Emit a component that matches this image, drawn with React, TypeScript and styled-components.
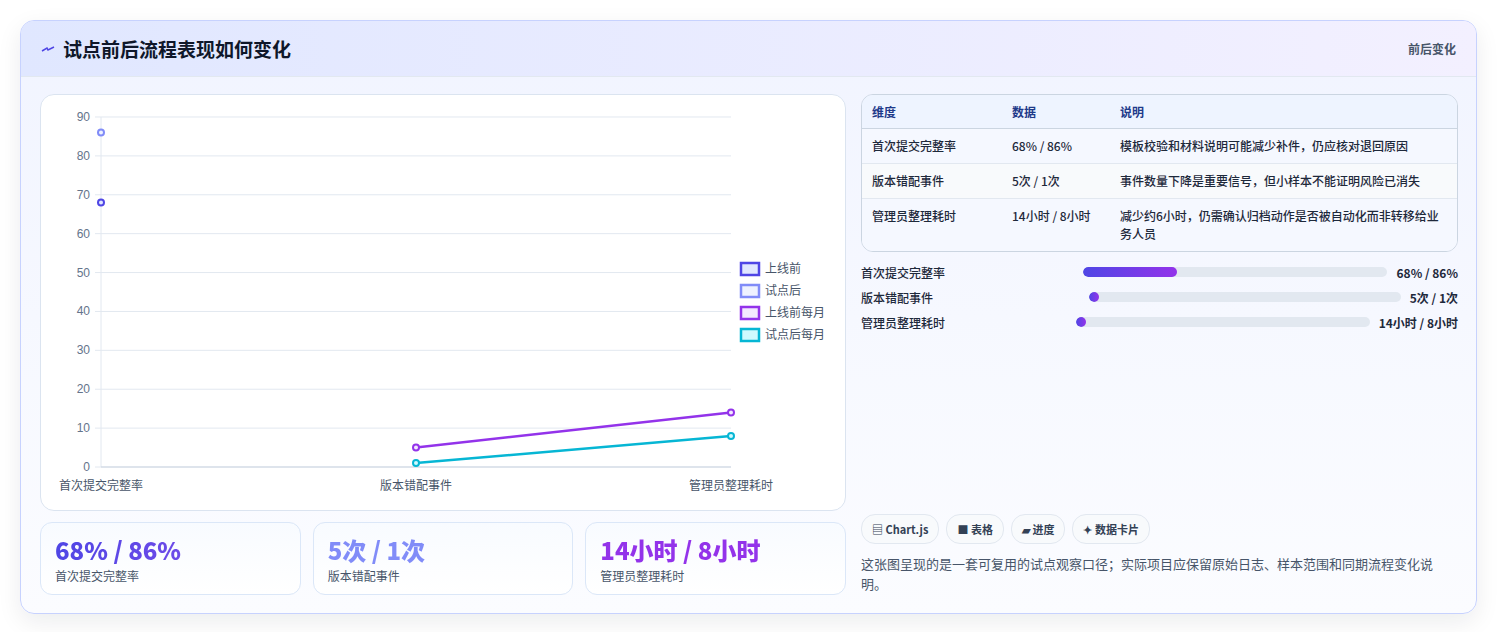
import styled, { createGlobalStyle } from "styled-components";

const GlobalStyle = createGlobalStyle`
  body {
    margin: 0;
    background: #ffffff;
    font-family: "Noto Sans CJK SC", "Noto Sans", sans-serif;
    color: #1e293b;
  }
`;

const Page = styled.div`
  padding: 20px 21px 20px 20px;
`;

const Panel = styled.section`
  border: 1px solid #c7d2fe;
  border-radius: 14px;
  overflow: hidden;
  background: linear-gradient(180deg, #f1f4ff 0%, #fbfcff 100%);
  box-shadow: 0 8px 24px rgba(15, 23, 42, 0.08);
`;

const Header = styled.header`
  height: 55px;
  display: flex;
  align-items: center;
  justify-content: space-between;
  padding: 0 20px 0 20px;
  background: linear-gradient(90deg, #e0e7ff 0%, #f3f0ff 100%);
  border-bottom: 1px solid #e2e8f0;
`;

const Title = styled.h2`
  margin: 0;
  display: flex;
  align-items: center;
  gap: 8px;
  font-size: 19px;
  font-weight: 700;
  color: #0f172a;
`;

const Tag = styled.span`
  font-size: 12px;
  font-weight: 700;
  color: #475569;
`;

const Body = styled.div`
  display: grid;
  grid-template-columns: 806px 1fr;
  gap: 15px;
  padding: 17px 18px 18px 19px;
`;

const LeftCol = styled.div`
  display: flex;
  flex-direction: column;
  gap: 11px;
`;

const ChartCard = styled.div`
  height: 415px;
  background: #ffffff;
  border: 1px solid #dbe4f0;
  border-radius: 14px;
  overflow: hidden;
`;

const Stats = styled.div`
  display: grid;
  grid-template-columns: repeat(3, 1fr);
  gap: 12px;
`;

const StatCard = styled.div`
  height: 73px;
  box-sizing: border-box;
  padding: 12px 14px;
  border: 1px solid #dbe7f8;
  border-radius: 12px;
  background: linear-gradient(180deg, #f8fbff 0%, #ffffff 100%);
`;

const StatValue = styled.div<{ $from: string; $to: string }>`
  font-size: 24px;
  font-weight: 800;
  line-height: 30px;
  background: linear-gradient(90deg, ${(p) => p.$from}, ${(p) => p.$to});
  -webkit-background-clip: text;
  background-clip: text;
  color: transparent;
  width: fit-content;
`;

const StatLabel = styled.div`
  font-size: 12px;
  color: #475569;
  margin-top: 2px;
`;

const RightCol = styled.div`
  display: flex;
  flex-direction: column;
`;

const Table = styled.table`
  width: 100%;
  border-collapse: separate;
  border-spacing: 0;
  border: 1px solid #cbd5e1;
  border-radius: 12px;
  overflow: hidden;
  font-size: 12px;
  font-weight: 500;
  color: #1e293b;
`;

const Th = styled.th`
  text-align: left;
  font-weight: 700;
  color: #1e3a8a;
  background: #eef4ff;
  padding: 8px 10px;
  height: 16px;
  border-bottom: 1px solid #cbd5e1;
`;

const Td = styled.td<{ $alt?: boolean; $last?: boolean }>`
  padding: 8px 10px;
  vertical-align: top;
  line-height: 18px;
  background: ${(p) => (p.$alt ? "#f8fafc" : "#f5f8ff")};
  border-bottom: ${(p) => (p.$last ? "none" : "1px solid #e2e8f0")};
`;

const Bars = styled.div`
  display: flex;
  flex-direction: column;
  gap: 7px;
  margin-top: 11px;
`;

const BarRow = styled.div`
  display: grid;
  grid-template-columns: 7fr 10fr auto;
  gap: 9px;
  align-items: center;
  font-size: 12px;
  font-weight: 500;
  height: 18px;
`;

const Track = styled.div`
  height: 10px;
  border-radius: 5px;
  background: #e2e8f0;
  overflow: hidden;
`;

const Fill = styled.div`
  height: 100%;
  min-width: 10px;
  border-radius: 5px;
  background: linear-gradient(90deg, #4f46e5, #9333ea);
`;

const BarValue = styled.span`
  font-weight: 700;
  color: #1e293b;
`;

const Spacer = styled.div`
  flex: 1;
`;

const Chips = styled.div`
  display: flex;
  gap: 7px;
`;

const Chip = styled.span`
  display: inline-flex;
  align-items: center;
  gap: 4px;
  height: 28px;
  padding: 0 10px;
  border: 1px solid #e2e8f0;
  border-radius: 14px;
  background: #f8fafc;
  font-size: 11px;
  font-weight: 700;
  color: #334155;
`;

const Note = styled.p`
  margin: 10px 0 1px;
  font-size: 13px;
  line-height: 20px;
  color: #475569;
  padding-right: 10px;
`;

const yTicks = [0, 10, 20, 30, 40, 50, 60, 70, 80, 90];
const py = (v: number) => 372 - v * 3.889;
const xs = [60, 375, 690];
const xLabels = ["首次提交完整率", "版本错配事件", "管理员整理耗时"];
const legend = [
  { label: "上线前", color: "#4f46e5", fill: "#e0e7ff" },
  { label: "试点后", color: "#818cf8", fill: "#eef2ff" },
  { label: "上线前每月", color: "#9333ea", fill: "#f3e8ff" },
  { label: "试点后每月", color: "#06b6d4", fill: "#cffafe" },
];

const Chart = () => (
  <svg width="806" height="415" viewBox="0 0 806 415" fontFamily='"Liberation Sans", "Noto Sans CJK SC", sans-serif'>
    {yTicks.map((t) => (
      <g key={t}>
        <line x1="54" x2="690" y1={py(t)} y2={py(t)} stroke="#e2e8f0" />
        <text x="49" y={py(t) + 4} fontSize="12" fill="#64748b" textAnchor="end">{t}</text>
      </g>
    ))}
    <line x1="60" x2="60" y1={py(90)} y2={py(0)} stroke="#e2e8f0" />
    <line x1="60" x2="690" y1={py(0)} y2={py(0)} stroke="#cbd5e1" />
    {xLabels.map((l, i) => (
      <text key={l} x={xs[i]} y="395" fontSize="12" fill="#475569" textAnchor="middle">{l}</text>
    ))}
    <circle cx="60" cy={py(68)} r="3" fill="#e0e7ff" stroke="#4f46e5" strokeWidth="2" />
    <circle cx="60" cy={py(86)} r="3" fill="#eef2ff" stroke="#818cf8" strokeWidth="2" />
    <polyline points={`${xs[1]},${py(5)} ${xs[2]},${py(14)}`} fill="none" stroke="#9333ea" strokeWidth="2.5" />
    <polyline points={`${xs[1]},${py(1)} ${xs[2]},${py(8)}`} fill="none" stroke="#06b6d4" strokeWidth="2.5" />
    {[[5, 14, "#9333ea", "#f3e8ff"], [1, 8, "#06b6d4", "#cffafe"]].map(([a, b, c, f]) => (
      <g key={c as string}>
        <circle cx={xs[1]} cy={py(a as number)} r="3" fill={f as string} stroke={c as string} strokeWidth="2" />
        <circle cx={xs[2]} cy={py(b as number)} r="3" fill={f as string} stroke={c as string} strokeWidth="2" />
      </g>
    ))}
    {legend.map((l, i) => (
      <g key={l.label}>
        <rect x="700" y={168 + i * 22} width="18" height="12" fill={l.fill} stroke={l.color} strokeWidth="2.5" />
        <text x="724" y={178 + i * 22} fontSize="12" fill="#475569">{l.label}</text>
      </g>
    ))}
  </svg>
);

const rows = [
  ["首次提交完整率", "68% / 86%", "模板校验和材料说明可能减少补件，仍应核对退回原因"],
  ["版本错配事件", "5次 / 1次", "事件数量下降是重要信号，但小样本不能证明风险已消失"],
  ["管理员整理耗时", "14小时 / 8小时", "减少约6小时，仍需确认归档动作是否被自动化而非转移给业务人员"],
];

const bars = [
  { label: "首次提交完整率", value: "68% / 86%", pct: 31 },
  { label: "版本错配事件", value: "5次 / 1次", pct: 2 },
  { label: "管理员整理耗时", value: "14小时 / 8小时", pct: 2 },
];

export default function App() {
  return (
    <Page>
      <GlobalStyle />
      <Panel>
        <Header>
          <Title>
            <svg width="14" height="10" viewBox="0 0 14 10">
              <path d="M1 7 L6 4 L7 6 L13 3" fill="none" stroke="#4f46e5" strokeWidth="1.5" />
            </svg>
            试点前后流程表现如何变化
          </Title>
          <Tag>前后变化</Tag>
        </Header>
        <Body>
          <LeftCol>
            <ChartCard>
              <Chart />
            </ChartCard>
            <Stats>
              <StatCard>
                <StatValue $from="#4f46e5" $to="#6d4ae8">68% / 86%</StatValue>
                <StatLabel>首次提交完整率</StatLabel>
              </StatCard>
              <StatCard>
                <StatValue $from="#818cf8" $to="#818cf8">5次 / 1次</StatValue>
                <StatLabel>版本错配事件</StatLabel>
              </StatCard>
              <StatCard>
                <StatValue $from="#9333ea" $to="#9333ea">14小时 / 8小时</StatValue>
                <StatLabel>管理员整理耗时</StatLabel>
              </StatCard>
            </Stats>
          </LeftCol>
          <RightCol>
            <Table>
              <thead>
                <tr>
                  <Th style={{ width: 120 }}>维度</Th>
                  <Th style={{ width: 88 }}>数据</Th>
                  <Th>说明</Th>
                </tr>
              </thead>
              <tbody>
                {rows.map((r, i) => (
                  <tr key={r[0]}>
                    {r.map((c) => (
                      <Td key={c} $alt={i === 1} $last={i === rows.length - 1}>{c}</Td>
                    ))}
                  </tr>
                ))}
              </tbody>
            </Table>
            <Bars>
              {bars.map((b) => (
                <BarRow key={b.label}>
                  <span>{b.label}</span>
                  <Track>
                    <Fill style={{ width: `${b.pct}%` }} />
                  </Track>
                  <BarValue>{b.value}</BarValue>
                </BarRow>
              ))}
            </Bars>
            <Spacer />
            <Chips>
              <Chip>▤ Chart.js</Chip>
              <Chip>■ 表格</Chip>
              <Chip>▰ 进度</Chip>
              <Chip>✦ 数据卡片</Chip>
            </Chips>
            <Note>这张图呈现的是一套可复用的试点观察口径；实际项目应保留原始日志、样本范围和同期流程变化说明。</Note>
          </RightCol>
        </Body>
      </Panel>
    </Page>
  );
}
